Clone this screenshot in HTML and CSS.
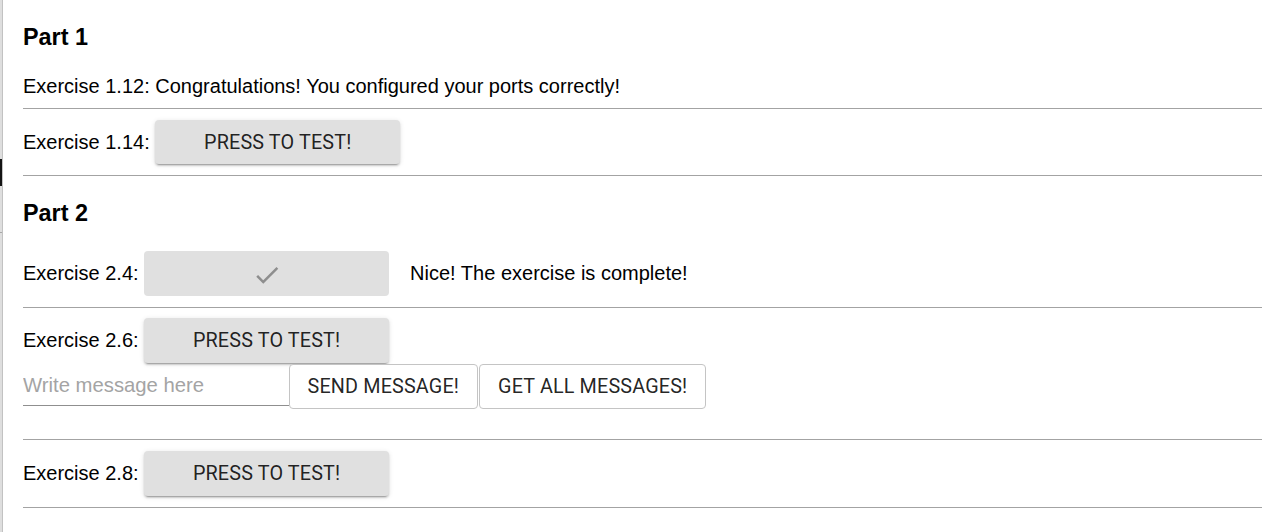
FILE: index.html
```html
<!DOCTYPE html>
<html lang="en">
<head>
<meta charset="utf-8">
<title>Exercises</title>
<link rel="stylesheet" href="styles.css">
</head>
<body>
<div class="page">
  <div class="strip">
    <div class="strip-mark"></div>
    <div class="strip-tick"></div>
  </div>
  <main class="main">
    <h3 class="part part-first">Part 1</h3>
    <div class="row row-text">Exercise 1.12: Congratulations! You configured your ports correctly!</div>
    <div class="rule rule-after-text"></div>
    <div class="row row-btn row-short">
      <span class="label">Exercise 1.14:</span>
      <button class="btn btn-contained">PRESS TO TEST!</button>
    </div>
    <div class="rule"></div>

    <h3 class="part">Part 2</h3>
    <div class="row row-btn row-first">
      <span class="label">Exercise 2.4:</span>
      <button class="btn btn-done" disabled>
        <svg class="check" viewBox="0 0 24 24" width="30" height="30"><path d="M9 16.17L4.83 12l-1.42 1.41L9 19 21 7l-1.41-1.41z"/></svg>
      </button>
      <span class="note">Nice! The exercise is complete!</span>
    </div>
    <div class="rule"></div>
    <div class="row row-btn row-tight">
      <span class="label">Exercise 2.6:</span>
      <button class="btn btn-contained">PRESS TO TEST!</button>
    </div>
    <div class="row msg-row">
      <input class="msg-input" type="text" placeholder="Write message here">
      <button class="btn-outlined">SEND MESSAGE!</button>
      <button class="btn-outlined">GET ALL MESSAGES!</button>
    </div>
    <div class="rule rule-spaced"></div>
    <div class="row row-btn">
      <span class="label">Exercise 2.8:</span>
      <button class="btn btn-contained">PRESS TO TEST!</button>
    </div>
    <div class="rule"></div>
  </main>
</div>
</body>
</html>
```

FILE: styles.css
```css
html, body {
  margin: 0;
  padding: 0;
  background: #ffffff;
}

body {
  font-family: "Liberation Sans", Arial, sans-serif;
  font-size: 20px;
  color: #000000;
}

.page {
  display: flex;
  min-height: 100vh;
}

.strip {
  width: 2px;
  flex: 0 0 2px;
  background: #dedede;
  border-right: 1px solid #c2c2c2;
  display: flex;
  flex-direction: column;
}

.strip-mark {
  margin-top: 159px;
  height: 27px;
  background: #141414;
}

.strip-tick {
  margin-top: 46px;
  height: 1px;
  background: #a8a8a8;
}

.main {
  flex: 1;
  padding: 24px 12px 0 20px;
  display: flex;
  flex-direction: column;
}

.part {
  margin: 24px 0 0;
  font-size: 23.4px;
  font-weight: bold;
  line-height: 27px;
}

.part-first {
  margin-top: 0;
}

.row {
  display: flex;
  align-items: center;
}

.row-text {
  margin-top: 24px;
  height: 23px;
  line-height: 23px;
}

.rule {
  margin-top: 11px;
  height: 0;
  border-top: 1px solid #a3a3a3;
}

.rule-after-text {
  margin-top: 10px;
}

.rule-spaced {
  margin-top: 30px;
}

.row-btn {
  margin-top: 11px;
  height: 45px;
  line-height: 23px;
}

.row-short {
  height: 44px;
}

.row-first {
  margin-top: 24px;
}

.row-tight {
  margin-top: 10px;
}

.label {
  margin-right: 5.5px;
}

.btn {
  width: 245px;
  height: 100%;
  border: 0;
  border-radius: 4px;
  background: #e0e0e0;
  font-family: Roboto, "Liberation Sans", sans-serif;
  font-size: 19.8px;
  letter-spacing: 0.15px;
  font-weight: 400;
  color: rgba(0, 0, 0, 0.87);
  padding: 0;
  display: flex;
  align-items: center;
  justify-content: center;
}

.btn-contained {
  box-shadow: 0 3px 1px -2px rgba(0, 0, 0, 0.2), 0 2px 2px 0 rgba(0, 0, 0, 0.14), 0 1px 5px 0 rgba(0, 0, 0, 0.12);
}

.btn-done {
  box-shadow: none;
}

.check {
  fill: #8e8e8e;
  margin-top: 2px;
}

.note {
  margin-left: 21px;
}

.msg-row {
  margin-top: 1px;
  height: 45px;
  align-items: flex-start;
}

.msg-input {
  width: 265.5px;
  height: 39px;
  padding: 2px 0 0;
  margin: 0;
  border: 0;
  border-bottom: 1px solid #8f8f8f;
  outline: none;
  font-family: "Liberation Sans", Arial, sans-serif;
  font-size: 20.3px;
  color: #000;
  background: transparent;
  box-sizing: content-box;
}

.msg-input::placeholder {
  color: #a4a4a4;
  opacity: 1;
}

.btn-outlined {
  height: 45px;
  margin: 0 1px 0 0;
  padding: 0 18px;
  border: 1px solid #c4c4c4;
  border-radius: 4px;
  background: #ffffff;
  font-family: Roboto, "Liberation Sans", sans-serif;
  font-size: 19.8px;
  letter-spacing: 0.15px;
  font-weight: 400;
  color: rgba(0, 0, 0, 0.87);
}
```
